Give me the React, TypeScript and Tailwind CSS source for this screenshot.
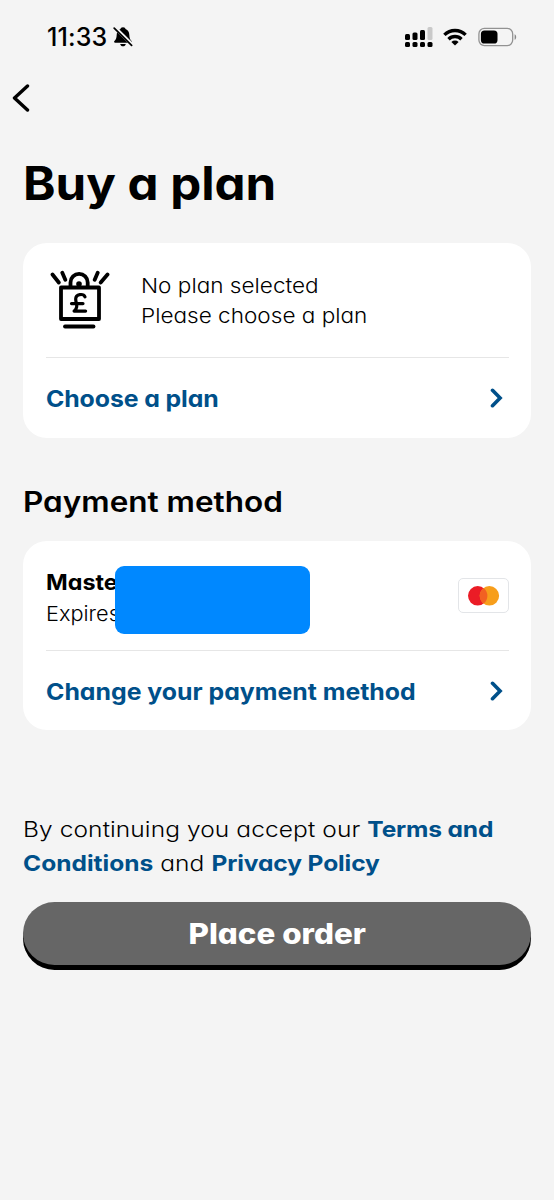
import React from "react";

const StatusBar: React.FC = () => {
  return (
    <div className="flex h-[74px] items-center pl-[47px] pr-[37px]">
      <div className="text-[25px] leading-[30px] font-medium tracking-[0.1px]">
        11:33
      </div>
      <svg className="ml-[6px] h-[22px] w-[20px]" viewBox="0 0 20 22">
        <path
          d="M10 1.2c1.6 0 2.4.9 2.6 1.9 2.4.9 3.6 3 3.7 5.6.1 3.6.9 4.9 2.3 6.3.6.6.3 1.7-.7 1.7H2.1c-1 0-1.3-1.1-.7-1.7 1.4-1.4 2.2-2.7 2.3-6.3.1-2.6 1.3-4.7 3.7-5.6.2-1 1-1.9 2.6-1.9zM7.2 18h5.6c-.3 1.5-1.4 2.3-2.8 2.3S7.5 19.5 7.2 18z"
          fill="#000"
        />
        <path d="M1.800 1.500L19.500 19" stroke="#f4f4f4" strokeWidth="3.600" />
        <path
          d="M1.200 2.200L18.600 19.400"
          stroke="#000"
          strokeWidth="1.700"
          strokeLinecap="round"
        />
      </svg>
      <svg className="ml-auto h-[22px] w-[30px]" viewBox="0 0 30 22">
        <g fill="#000">
          <rect x="0" y="8" width="5" height="6" rx="1.500" />
          <rect x="7.500" y="6.500" width="5" height="7.500" rx="1.500" />
          <rect x="15" y="4" width="5" height="10" rx="1.500" />
          <rect x="0" y="16" width="5" height="5" rx="1.500" />
          <rect x="7.500" y="16" width="5" height="5" rx="1.500" />
          <rect x="15" y="16" width="5" height="5" rx="1.500" />
          <rect x="22.500" y="16" width="5" height="5" rx="1.500" />
        </g>
        <rect x="22.500" y="1" width="5" height="13" rx="1.500" fill="#c9c9c9" />
      </svg>
      <svg className="ml-[8px] mr-px h-[18px] w-[24px]" viewBox="0 0 24 18">
        <g fill="none" stroke="#000" strokeWidth="3.400">
          <path d="M1.400 6.900a15 15 0 0 1 21.200 0" />
          <path d="M5.500 11.200a9.200 9.200 0 0 1 13 0" />
        </g>
        <path d="M12 17.600l-3.600-3.700a5.100 5.100 0 0 1 7.200 0z" fill="#000" />
      </svg>
      <svg className="ml-[10px] h-[20px] w-[39px]" viewBox="0 0 39 20">
        <rect
          x="0.900"
          y="1.400"
          width="33.800"
          height="17.200"
          rx="5.500"
          fill="none"
          stroke="#929292"
          strokeWidth="1.300"
        />
        <rect x="2.900" y="3.500" width="16.600" height="13" rx="3.600" fill="#000" />
        <path d="M36.600 7.200c2.100.8 2.100 4.800 0 5.600z" fill="#888" />
      </svg>
    </div>
  );
};

const ShoppingBagIcon: React.FC = () => {
  return (
    <svg
      className="h-[60px] w-[60px]"
      viewBox="0 0 60 60"
      fill="none"
      stroke="#000"
      strokeWidth="3.800"
      strokeLinecap="round"
      strokeLinejoin="round"
    >
      <rect x="11" y="17.500" width="38" height="31.500" />
      <path d="M20.500 17v-4.500a8.600 8.600 0 0 1 17.200 0v4.500" />
      <circle cx="29" cy="14" r="2.800" fill="#000" stroke="none" />
      <path d="M2.500 4.500l6.300 8M12.300 2.800l3 7M47.700 2.800l-3 7M57.500 4.500l-6.800 8" />
      <path d="M15 56.500h28.500" />
      <path
        d="M35 26.800c-1.500-3.400-9.300-3.200-9.300 2.300 0 3.300 1.400 5 1 7.700-.2 1.800-1.200 3.400-2.600 4.300h11.500M21.500 33.600h11.500"
        strokeWidth="3.200"
      />
    </svg>
  );
};

const MastercardLogo: React.FC = () => {
  return (
    <div className="flex h-[35px] w-[51px] items-center justify-center rounded-[5px] border-[1.500px] border-[#e3e5e8] bg-white">
      <svg className="h-[20px] w-[33px]" viewBox="0 0 33 20">
        <circle cx="10.700" cy="9.800" r="9.700" fill="#eb1c26" />
        <circle cx="22.400" cy="9.800" r="9.700" fill="#f79e1b" />
        <path d="M16.550 2.050a9.700 9.700 0 0 1 0 15.500a9.700 9.700 0 0 1 0-15.500z" fill="#f26122" />
      </svg>
    </div>
  );
};

const LinkRow: React.FC<{ children: React.ReactNode; className: string }> = ({
  children,
  className,
}) => {
  return (
    <button
      className={`flex w-full items-center justify-between border-t-[1.500px] border-[#e6e6e6] text-start text-[23px] font-bold text-[#00508a] ${className}`}
    >
      <span className="origin-left scale-x-[1.080] pt-[3px] whitespace-nowrap">
        {children}
      </span>
      <svg
        className="mr-[6px] h-[20px] w-[13px]"
        viewBox="0 0 13 20"
        fill="none"
        stroke="#00508a"
        strokeWidth="3.600"
        strokeLinecap="round"
        strokeLinejoin="miter"
      >
        <path d="M2.500 2.300l7.600 7.700-7.600 7.700" />
      </svg>
    </button>
  );
};

export default function App() {
  return (
    <div className="flex h-[1200px] w-[554px] flex-col bg-[#f4f4f4] font-['Inter','Liberation_Sans',sans-serif] text-black [font-feature-settings:'cv11']">
      <StatusBar />
      <button className="flex h-[48px] items-center pl-[12px]" aria-label="Back">
        <svg
          className="h-[28px] w-[18px]"
          viewBox="0 0 18 28"
          fill="none"
          stroke="#000"
          strokeWidth="3.400"
          strokeLinecap="round"
          strokeLinejoin="round"
        >
          <path d="M15.500 2L2.500 14l13 12" />
        </svg>
      </button>
      <main className="flex flex-col px-[23px]">
        <h1 className="mt-[31px] w-fit origin-left scale-x-[1.070] text-[46px] leading-[60px] font-bold">
          Buy a plan
        </h1>

        <section className="mt-[30px] h-[195px] rounded-[24px] bg-white px-[22.500px]">
          <div className="flex h-[114px] items-center pl-[4px]">
            <ShoppingBagIcon />
            <p className="ml-[31.500px] origin-left scale-x-[1.100] pt-[2px] text-[20.500px] leading-[30px] font-light">
              No plan selected
              <br />
              Please choose a plan
            </p>
          </div>
          <LinkRow className="h-[81px] tracking-[-0.100px]">Choose a plan</LinkRow>
        </section>

        <h2 className="mt-[44px] w-fit origin-left scale-x-[1.125] text-[28px] leading-[40px] font-semibold">
          Payment method
        </h2>

        <section className="mt-[19px] h-[189px] rounded-[24px] bg-white px-[22.500px]">
          <div className="relative flex h-[109px] items-center justify-between">
            <div className="origin-left scale-x-[1.060] pt-[4px]">
              <div className="text-[22px] leading-[32px] font-bold">Maste</div>
              <div className="text-[20.500px] leading-[32px] font-light">
                Expires
              </div>
            </div>
            <div className="absolute top-[25px] left-[69.500px] h-[67.500px] w-[194.500px] rounded-[9px] bg-[#0088ff]" />
            <MastercardLogo />
          </div>
          <LinkRow className="h-[80px]">Change your payment method</LinkRow>
        </section>

        <p className="mt-[82px] w-fit origin-left scale-x-[1.115] text-[22px] leading-[34px] font-light tracking-[0.070px] whitespace-nowrap">
          By continuing you accept our{" "}
          <a className="font-bold tracking-[-0.150px] text-[#00508a]">Terms and</a>
          <br />
          <a className="font-bold tracking-[0px] text-[#00508a]">Conditions</a> and{" "}
          <a className="font-bold tracking-[-0.100px] text-[#00508a]">
            Privacy Policy
          </a>
        </p>

        <button className="mt-[22px] flex h-[62.500px] items-center justify-center rounded-[32px] bg-[#666] text-[28px] font-extrabold text-white shadow-[0_5px_0_#000]">
          <span className="scale-x-[1.120] pt-px">Place order</span>
        </button>
      </main>
    </div>
  );
}
